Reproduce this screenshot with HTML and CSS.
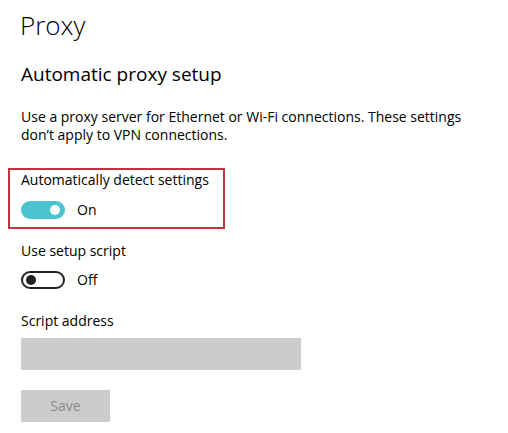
FILE: index.html
```html
<!DOCTYPE html>
<html>
<head>
<meta charset="utf-8">
<link rel="stylesheet" href="styles.css">
</head>
<body>
<main class="page">
  <h1 class="title">Proxy</h1>
  <h2 class="subtitle">Automatic proxy setup</h2>
  <p class="desc">Use a proxy server for Ethernet or Wi-Fi connections. These settings don’t apply to VPN connections.</p>

  <section class="setting highlight">
    <div class="label">Automatically detect settings</div>
    <div class="toggle-row">
      <span class="toggle on"><span class="knob"></span></span>
      <span class="state">On</span>
    </div>
  </section>

  <section class="setting script">
    <div class="label">Use setup script</div>
    <div class="toggle-row">
      <span class="toggle off"><span class="knob"></span></span>
      <span class="state">Off</span>
    </div>
  </section>

  <section class="setting address">
    <div class="label">Script address</div>
    <div class="input"></div>
    <div class="button">Save</div>
  </section>
</main>
</body>
</html>
```

FILE: styles.css
```css
html, body {
  margin: 0;
  padding: 0;
  background: #ffffff;
}
body {
  font-family: "Open Sans", "Noto Sans", sans-serif;
  color: #000000;
}
.page {
  padding: 7px 0 0 21px;
}
.title {
  margin: 0 0 0 -1px;
  font-size: 26px;
  font-weight: 300;
  line-height: 36px;
}
.subtitle {
  margin: 18px 0 0 0;
  font-size: 19px;
  font-weight: 400;
  line-height: 26px;
}
.desc {
  margin: 21px 0 0 0;
  width: 460px;
  font-size: 14px;
  line-height: 18px;
}
.setting {
  display: flex;
  flex-direction: column;
  align-items: flex-start;
}
.highlight {
  margin: 24px 0 0 -13px;
  width: 202px;
  padding: 0 0 7px 11px;
  border: 2px solid #c3323c;
}
.label {
  font-size: 14px;
  line-height: 20px;
}
.toggle-row {
  display: flex;
  align-items: center;
  gap: 12px;
  margin-top: 10px;
}
.script {
  margin-top: 12px;
}
.script .toggle-row {
  margin-top: 9px;
}
.toggle {
  box-sizing: border-box;
  width: 44px;
  height: 18px;
  border-radius: 9px;
  display: flex;
  align-items: center;
  padding: 0 5px;
}
.toggle.on {
  background: #4cc4cf;
  justify-content: flex-end;
}
.toggle.off {
  border: 2px solid #222222;
  justify-content: flex-start;
  padding: 0 3px;
}
.knob {
  width: 10px;
  height: 10px;
  border-radius: 50%;
}
.on .knob { background: #ffffff; }
.off .knob { background: #222222; }
.state {
  font-size: 14px;
  line-height: 20px;
}
.address {
  margin-top: 21px;
}
.input {
  margin-top: 7px;
  width: 280px;
  height: 32px;
  background: #cccccc;
}
.button {
  margin-top: 20px;
  width: 89px;
  height: 32px;
  background: #cccccc;
  color: #8a8a8a;
  font-size: 14px;
  line-height: 32px;
  text-align: center;
}
```
